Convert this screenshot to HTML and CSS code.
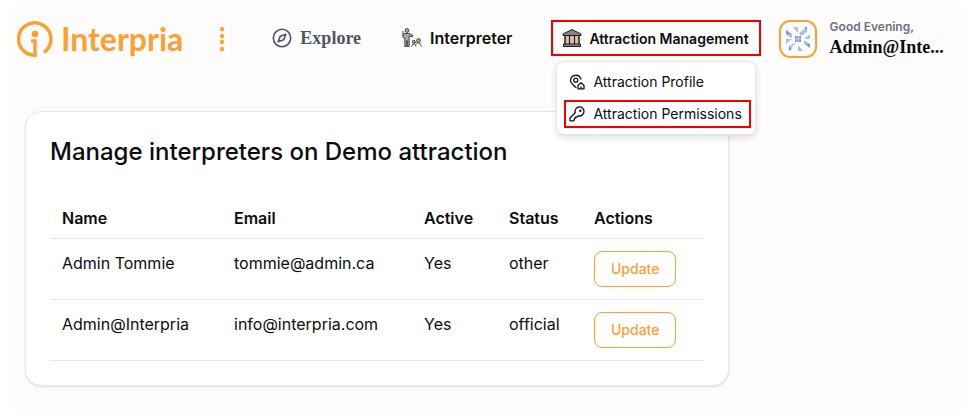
FILE: index.html
```html
<!DOCTYPE html>
<html lang="en">
<head>
  <meta charset="UTF-8">
  <meta name="viewport" content="width=device-width, initial-scale=1.0">
  <title>Interpria - Attraction Permissions</title>
  <link rel="stylesheet" href="styles.css">
</head>
<body>

<header class="topbar">
  <a href="#" class="logo">
    <svg width="36" height="36" viewBox="0 0 36 36" fill="none" stroke="#faa037" stroke-width="3.500">
      <path d="M18 34.200A16.200 16.200 0 1 1 28 30.500" stroke-linecap="round"/>
      <path d="M18 36V20H14"/>
      <circle cx="18" cy="13" r="3.300" fill="#faa037" stroke="none"/>
    </svg>
    <span>Interpria</span>
  </a>

  <button type="button" class="dots" aria-label="More">
    <svg width="6" height="26" viewBox="0 0 6 26" fill="#faa037">
      <circle cx="3" cy="3" r="2.200"/>
      <circle cx="3" cy="10" r="2.200"/>
      <circle cx="3" cy="16" r="2.200"/>
      <circle cx="3" cy="23" r="2.200"/>
    </svg>
  </button>

  <nav class="nav">
    <a href="#" class="nav-link explore">
      <svg width="20" height="20" viewBox="0 0 20 20" fill="none" stroke="#4b5563" stroke-width="1.600" stroke-linejoin="round">
        <circle cx="10" cy="10" r="8.700"/>
        <path d="M13.800 6.200L11.800 11.800L6.200 13.800L8.200 8.200Z"/>
      </svg>
      Explore
    </a>

    <a href="#" class="nav-link interpreter">
      <svg width="20" height="20" viewBox="0 0 20 20" fill="#a8a8a8" stroke="#3c3c3c" stroke-width="0.900" stroke-linejoin="round">
        <circle cx="5" cy="2.500" r="1.900"/>
        <path d="M2 5.500H7L11 7.500L10.500 8.800L7.200 8V18.500H5.300V12.500H4.700V18.500H2.800V10L1 9.500V6.500Z"/>
        <path d="M1 3V8" fill="none"/>
        <circle cx="11.800" cy="13.800" r="1.500"/>
        <circle cx="16.500" cy="12.500" r="1.900"/>
        <path d="M9.500 18.500L11 16H13L14 18.500M14 16L15.500 15H17.500L19.500 18.500M13 15L14.500 13.500" fill="none"/>
      </svg>
      Interpreter
    </a>

    <div class="menu">
      <button type="button" class="menu-button" aria-expanded="true">
        <svg width="20" height="20" viewBox="0 0 20 20" stroke="#1d1d1f" stroke-width="1" stroke-linejoin="round">
          <path d="M1 6L10 1.500L19 6V7.500H1Z" fill="#82878c"/>
          <path d="M2.500 8H17.500V16H2.500Z" fill="#f3ece3" stroke="none"/>
          <path d="M5 8V16M10 8V16M15 8V16" stroke="#e58a3c"/>
          <path d="M3 8V16M7.500 8V16M12.500 8V16M17 8V16" stroke-width="1.500"/>
          <path d="M1.500 16H18.500V18.500H1.500Z" fill="#82878c"/>
        </svg>
        Attraction Management
      </button>

      <div class="dropdown">
        <a href="#" class="dropdown-item">
          <svg width="16" height="16" viewBox="0 0 16 16" fill="none" stroke="#111" stroke-width="1.300" stroke-linecap="round" stroke-linejoin="round">
            <path d="M7 13.500C4.500 11.500 1.500 9 1.500 6.200A5.300 5.300 0 0 1 11.900 5.200"/>
            <circle cx="6.800" cy="6.200" r="2"/>
            <path d="M9 11.500L12 8.800L15 11.500V14.800H9ZM12 14.500V12.800"/>
          </svg>
          Attraction Profile
        </a>
        <a href="#" class="dropdown-item active">
          <svg width="16" height="16" viewBox="0 0 16 16" fill="none" stroke="#111" stroke-width="1.300" stroke-linecap="round" stroke-linejoin="round">
            <path d="M6.200 6.800A4.500 4.500 0 1 1 9.300 9.800L8.200 10.800H6.800V12.200H5.400V13.600L4.600 14.800H1V12Z"/>
            <circle cx="11.300" cy="4.800" r="0.600" fill="#111"/>
          </svg>
          Attraction Permissions
        </a>
      </div>
    </div>
  </nav>

  <a href="#" class="user">
    <span class="avatar">
      <svg width="24" height="24" viewBox="0 0 24 24" fill="#a9bfe6">
        <path d="M7 0H12V6ZM13 6L21 0V5L15 9ZM0 3L6 7V11L0 8ZM24 7V12H18ZM0 12H6L0 17ZM18 13L24 17V21L18 17ZM3 24V19L10 15ZM12 18L17 24H12Z"/>
        <path d="M18 0H21V3ZM0 3L5 7H0ZM3 24V20L6 22ZM20 17L24 21V17Z" fill="#7798d2"/>
        <path d="M9 9H15V15H9Z" fill="#7798d2"/>
        <path d="M11 9V15M13 9V15M9 12H15" stroke="#dce5f5" stroke-width="0.700"/>
      </svg>
    </span>
    <span class="user-text">
      <span class="greeting">Good Evening,</span>
      <span class="user-name">Admin@Inte...</span>
    </span>
  </a>
</header>

<main class="card">
  <h1>Manage interpreters on Demo attraction</h1>
  <table>
    <thead>
    <tr>
      <th class="col-name">Name</th>
      <th class="col-email">Email</th>
      <th class="col-small">Active</th>
      <th class="col-small">Status</th>
      <th>Actions</th>
    </tr>
    </thead>
    <tbody>
    <tr>
      <td>Admin Tommie</td>
      <td>tommie@admin.ca</td>
      <td>Yes</td>
      <td>other</td>
      <td><button type="button" class="btn-update">Update</button></td>
    </tr>
    <tr>
      <td>Admin@Interpria</td>
      <td>info@interpria.com</td>
      <td>Yes</td>
      <td>official</td>
      <td><button type="button" class="btn-update">Update</button></td>
    </tr>
    </tbody>
  </table>
</main>

</body>
</html>
```

FILE: styles.css
```css
* {
  box-sizing: border-box;
}

html {
  background-color: #fff;
}

body {
  margin: 8px;
  padding-bottom: 20px;
  background-color: #fdfcfa;
  color: #0c0c0f;
  font-family: Inter, sans-serif;
  font-size: 16px;
  line-height: 24px;
}

a {
  color: inherit;
  text-decoration: none;
}

button {
  font-family: inherit;
  color: inherit;
  cursor: pointer;
}

svg {
  display: block;
  flex-shrink: 0;
}

.topbar {
  display: flex;
  align-items: center;
  padding: 12px 16px 0 9px;
}

.logo {
  display: flex;
  align-items: center;
  gap: 8px;
  color: #faa037;
  font-family: Lato, sans-serif;
  font-size: 32px;
  font-weight: bold;
  line-height: 38px;
}

.dots {
  margin-left: 36px;
  padding: 0;
  border: none;
  background: none;
}

.nav {
  display: flex;
  align-items: center;
  margin-bottom: 2px;
  margin-left: 47px;
}

.nav-link {
  display: flex;
  align-items: center;
  gap: 8px;
}

.explore {
  color: #4b5563;
  font-family: "Liberation Serif", serif;
  font-size: 18px;
  font-weight: bold;
}

.interpreter {
  margin-left: 41px;
  font-weight: 600;
}

.menu {
  position: relative;
  margin-left: 39px;
}

.menu-button {
  display: flex;
  align-items: center;
  gap: 7px;
  height: 36px;
  padding: 0 10px 0 9px;
  border: 2px solid #f00000;
  background: none;
  font-size: 14px;
  font-weight: 600;
  white-space: nowrap;
}

.dropdown {
  position: absolute;
  top: 41px;
  left: 5px;
  width: 200px;
  padding: 6px 4px 6px 7px;
  border: 1px solid #e5e7eb;
  border-radius: 8px;
  background-color: #fff;
  box-shadow: 0 3px 6px rgba(0, 0, 0, 0.12);
}

.dropdown-item {
  display: flex;
  align-items: center;
  gap: 8px;
  height: 28px;
  padding: 0 5px;
  font-size: 14px;
  white-space: nowrap;
}

.dropdown-item.active {
  margin-top: 4px;
  padding: 0 3px;
  border: 2px solid #f00000;
}

.user {
  display: flex;
  align-items: center;
  gap: 13px;
  margin-left: 18px;
}

.avatar {
  display: flex;
  flex-shrink: 0;
  align-items: center;
  justify-content: center;
  width: 38px;
  height: 38px;
  border: 2px solid #faa037;
  border-radius: 11px;
  background-color: #fff;
}

.user-text {
  display: flex;
  flex-direction: column;
  gap: 2px;
  white-space: nowrap;
}

.greeting {
  color: #6b7280;
  font-size: 12px;
  font-weight: 600;
  line-height: 14px;
}

.user-name {
  font-family: "Liberation Serif", serif;
  font-size: 18px;
  font-weight: bold;
  line-height: 22px;
}

.card {
  max-width: 704px;
  margin: 53px 17px 0;
  padding: 24px;
  border: 1px solid #e5e7eb;
  border-radius: 16px;
  background-color: #fff;
  box-shadow: 0 1px 2px rgba(0, 0, 0, 0.12);
}

h1 {
  margin: 0 0 30px;
  font-size: 24px;
  font-weight: 500;
  line-height: 32px;
}

table {
  width: 100%;
  border-collapse: collapse;
  table-layout: fixed;
}

tr {
  border-bottom: 1px solid #e5e7eb;
}

th {
  height: 40px;
  padding: 0 12px;
  font-weight: 600;
  text-align: left;
}

td {
  padding: 12px;
  vertical-align: top;
}

.col-name {
  width: 172px;
}

.col-email {
  width: 190px;
}

.col-small {
  width: 85px;
}

.btn-update {
  display: block;
  height: 36px;
  padding: 0 16px;
  border: 1px solid #faa037;
  border-radius: 8px;
  background-color: #fff;
  color: #faa037;
  font-size: 14px;
  font-weight: 500;
}
```
